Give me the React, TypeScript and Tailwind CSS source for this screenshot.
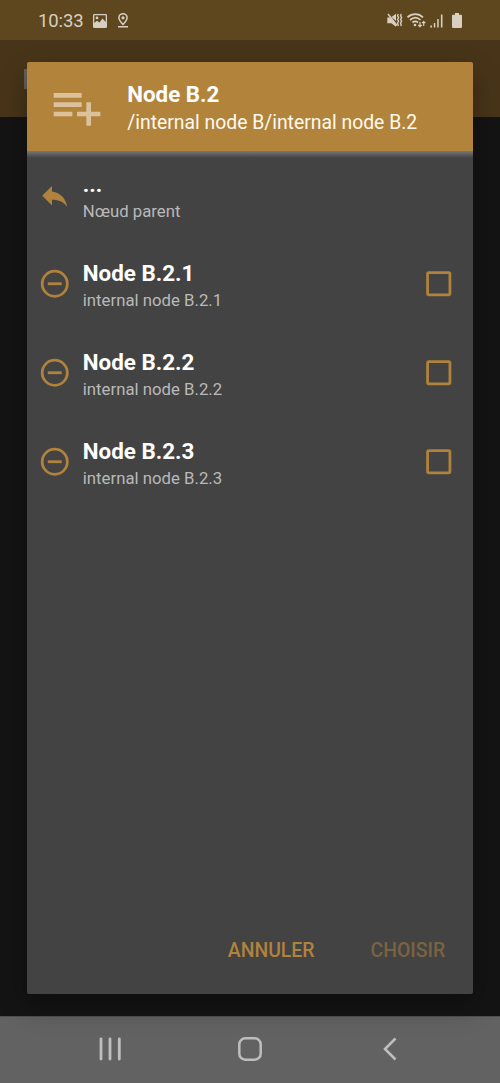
import React from "react";

const nodes = ["B.2.1", "B.2.2", "B.2.3"];

function StatusBar() {
  return (
    <div className="flex h-10 shrink-0 items-center justify-between bg-[#5e461e] pl-[38px] pr-[38px] pt-px text-[#d7cfc2]">
      <div className="flex items-center">
        <span className="w-[46px] whitespace-nowrap pt-px text-[18.500px] leading-5 tracking-[-0.1px]">10:33</span>
        <svg className="ml-[9px] h-[14px] w-[14px]" viewBox="0 0 14 14" fill="currentColor">
          <path fillRule="evenodd" d="M1.200 0h11.600Q14 0 14 1.200v11.600Q14 14 12.800 14H1.200Q0 14 0 12.800V1.200Q0 0 1.200 0ZM1.300 1.300V9L4 6.800L6.500 8.500L9.500 4.500L12.700 8V1.300ZM4 2.500A1.400 1.400 0 1 1 4 5.300A1.400 1.400 0 1 1 4 2.500Z" />
        </svg>
        <svg className="ml-[11px] h-[15px] w-[10px]" viewBox="0 0 10 15" fill="none" stroke="currentColor" strokeWidth="1.500">
          <path d="M5 11.500C3 9.300.9 7.200.9 4.800A4.100 4.100 0 0 1 9.100 4.800C9.100 7.200 7 9.300 5 11.500ZM0 13.800H10" />
          <circle cx="5" cy="4.800" r="1.600" fill="currentColor" stroke="none" />
        </svg>
      </div>
      <div className="flex items-center">
        <svg className="h-[15px] w-[16px]" viewBox="0 0 16 15" fill="none" stroke="currentColor">
          <path fill="currentColor" stroke="none" d="M.3 4.500H2.800L9 10.500V13.800L4.300 10.200H.3ZM4.500 4L9 .8V8Z" />
          <path strokeWidth="1.500" d="M1 1L10 12.500" />
          <path strokeWidth="1.400" d="M11.300 1L10.600 2.800L11.600 4.600L10.600 6.400L11.600 8.200L10.600 10L11.300 13M14.300 1L13.600 2.800L14.600 4.600L13.600 6.400L14.600 8.200L13.600 10L14.300 13" />
        </svg>
        <svg className="ml-[4px] h-[15px] w-[19px]" viewBox="0 0 19 15" fill="none" stroke="currentColor" strokeWidth="1.700">
          <path d="M.5 4.300C5 .1 11.500.1 16 4.300M3 7C6.300 4 10.300 4 13.500 7M5.500 9.500C7.300 8 9.200 8 11 9.500" />
          <circle cx="8" cy="12" r="1.300" fill="currentColor" stroke="none" />
          <path strokeWidth="1.200" d="M13 9V13.500M11.300 12L13 13.700L14.700 12M16.700 13V8.500M15 10.200L16.700 8.500L18.400 10.200" />
        </svg>
        <svg className="ml-[4px] h-[14px] w-[13px]" viewBox="0 0 13 14" fill="currentColor">
          <path d="M.3 11.500H2V13.500H.3ZM3.800 9H5.300V13.500H3.800ZM7.200 5H8.700V13.500H7.200ZM10.900 .5H12.500V13.500H10.900Z" />
        </svg>
        <svg className="ml-[9px] h-[15px] w-[10px]" viewBox="0 0 10 15" fill="currentColor">
          <path d="M3 0H7V1.700H9Q10 1.700 10 2.700V13.700Q10 15 9 15H1Q0 15 0 13.700V2.700Q0 1.700 1 1.700H3Z" />
        </svg>
      </div>
    </div>
  );
}

function NavigationBar() {
  return (
    <div className="flex h-[67px] shrink-0 items-center border-t border-[#505050] bg-[#626262] pb-[2px] pl-[98px] text-[#bebebe]">
      <svg className="h-[24px] w-[24px]" viewBox="0 0 24 24" stroke="currentColor" strokeWidth="2.800" strokeLinecap="round">
        <path d="M3 2V22M12 2V22M21.300 2V22" />
      </svg>
      <svg className="ml-[116px] h-[24px] w-[24px]" viewBox="0 0 24 24" fill="none" stroke="currentColor" strokeWidth="2.500">
        <rect x="1.300" y="1.300" width="21.400" height="21.400" rx="6" />
      </svg>
      <svg className="ml-[120px] h-[24px] w-[16px]" viewBox="0 0 16 24" fill="none" stroke="currentColor" strokeWidth="2.600">
        <path d="M13.500 1.500L3 12L13.500 22.500" />
      </svg>
    </div>
  );
}

function NodeRow({ id }: { id: string }) {
  return (
    <li className="flex h-[89px] items-center">
      <svg className="h-[33.500px] w-[33.500px] shrink-0 text-[#b0823c]" viewBox="0 0 24 24" fill="none" stroke="currentColor" strokeWidth="2">
        <circle cx="12" cy="12" r="9" />
        <path d="M7 12H17" />
      </svg>
      <div className="ml-[10.800px] flex-1 pt-[4.500px]">
        <div className="text-[22.400px] font-bold leading-[26px] text-white">Node {id}</div>
        <div className="pt-px text-[16.750px] leading-[26px] text-[#b9b9b9]">internal node {id}</div>
      </div>
      <svg className="h-[33.500px] w-[33.500px] shrink-0 text-[#b0823c]" viewBox="0 0 24 24" fill="none" stroke="currentColor" strokeWidth="2">
        <rect x="4" y="4" width="16" height="16" rx="1" />
      </svg>
    </li>
  );
}

function NodeDialog() {
  return (
    <div className="absolute inset-x-[27.300px] top-[62px] flex h-[931.500px] flex-col overflow-hidden rounded-[2px] bg-[#434343] shadow-[0_12px_28px_rgba(0,0,0,0.32)]">
      <header className="flex h-[89px] shrink-0 items-center bg-[#b2833b] pl-[22px]">
        <svg className="h-[56px] w-[56px] text-[#dcc19c]" viewBox="0 0 24 24" fill="currentColor">
          <path d="M2,16H10V14H2M18,14V10H16V14H12V16H16V20H18V16H22V14M14,6H2V8H14M14,10H2V12H14" />
        </svg>
        <div className="ml-[22px] whitespace-nowrap pt-[4px] text-white">
          <div className="text-[22.300px] font-bold leading-[27px]">Node B.2</div>
          <div className="pt-px text-[19.350px] leading-[28px] text-[#fffaf0]">/internal node B/internal node B.2</div>
        </div>
      </header>
      <div className="h-[7px] shrink-0 bg-linear-to-b from-[#777777] to-[#434343]" />
      <ul className="flex-1 pl-[11.200px] pr-[17px]">
        <li className="flex h-[81.600px] items-start pt-[21px]">
          <svg className="h-[33.500px] w-[33.500px] shrink-0 text-[#b0823c]" viewBox="0 0 24 24" fill="currentColor">
            <path d="M10,9V5L3,12L10,19V14.900C15,14.900 18.500,16.500 21,20C20,15 17,10 10,9Z" />
          </svg>
          <div className="-mt-[6px] ml-[10.800px]">
            <div className="text-[22.400px] font-bold leading-[22px] text-white">...</div>
            <div className="pt-[3px] text-[16.750px] leading-[26px] text-[#b9b9b9]">Nœud parent</div>
          </div>
        </li>
        {nodes.map((id) => (
          <NodeRow key={id} id={id} />
        ))}
      </ul>
      <footer className="flex h-[87px] shrink-0 justify-end gap-[56px] pr-[27.500px] pt-[30px] text-[19.400px] font-medium leading-[28px]">
        <button className="h-[28px] text-[#b0823c]">ANNULER</button>
        <button className="h-[28px] text-[#7a6340]" disabled>CHOISIR</button>
      </footer>
    </div>
  );
}

export default function App() {
  return (
    <div className="relative flex h-[1083px] w-[500px] flex-col overflow-hidden bg-[#141414] font-[Roboto,sans-serif]">
      <StatusBar />
      <div className="flex h-[77px] shrink-0 items-center bg-[#483519] pl-[24px]">
        <div className="h-[20px] w-[12px] bg-[#686058]" />
      </div>
      <main className="flex-1" />
      <NavigationBar />
      <NodeDialog />
    </div>
  );
}
